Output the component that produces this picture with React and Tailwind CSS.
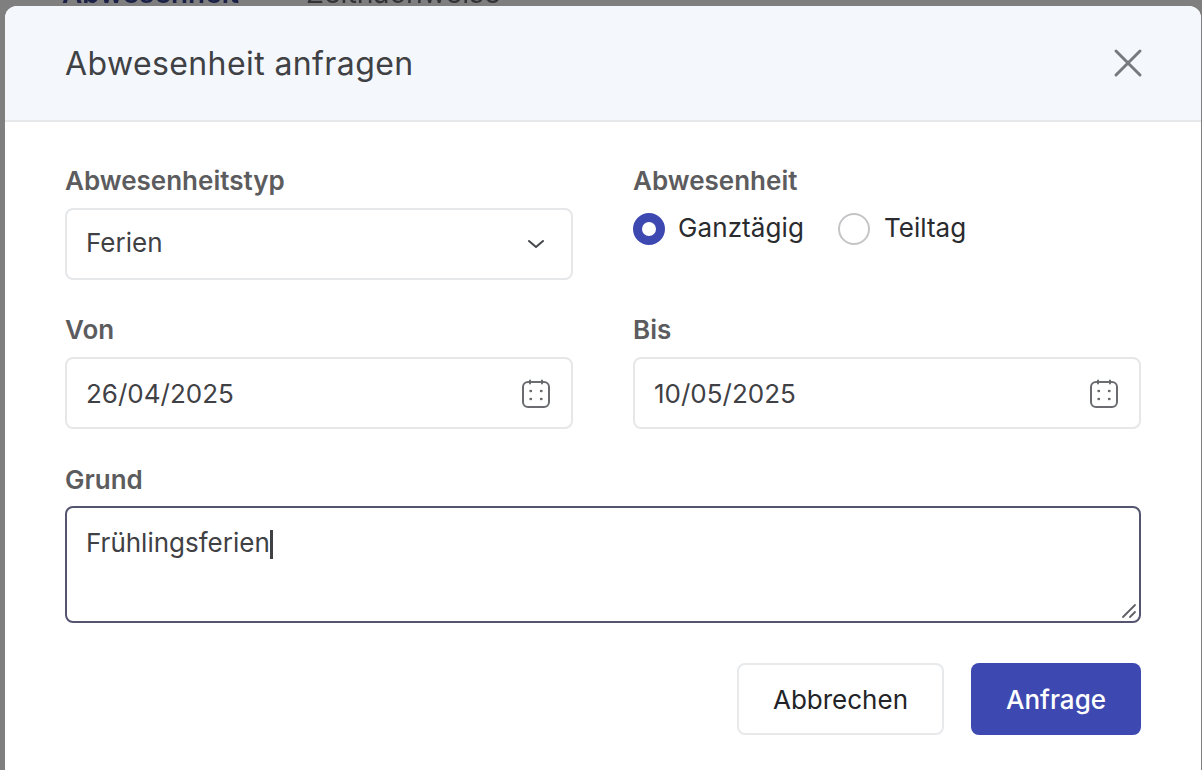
import React from "react";

const F = "font-['Inter','Liberation_Sans',sans-serif]";

function Label({ children }) {
  return <div className="h-[27px] text-[26px] leading-[25px] font-semibold text-[#5c5c5e]">{children}</div>;
}

function Calendar() {
  return (
    <svg width="30" height="30" viewBox="0 0 30 30" fill="none" stroke="#6a6c70" strokeWidth="2" strokeLinecap="round" className="mt-[2px]">
      <rect x="2" y="3" width="26" height="25" rx="5" />
      <path d="M9 1.5V4.5M21 1.5V4.5" />
      <path d="M9.5 12h.5M20 12h.5M9.5 20h.5M20 20h.5" strokeWidth="2.4" />
    </svg>
  );
}

function Field({ value, icon, textClass }) {
  return (
    <div className="mt-[13px] h-[72px] rounded-[8px] border-2 border-[#e6e7e9] bg-white flex items-center justify-between pl-[19px] pr-[20px] text-[26px] text-[#3f4145]">
      <span className={textClass}>{value}</span>
      {icon}
    </div>
  );
}

export default function App() {
  return (
    <div className={`${F} relative h-[770px] w-[1202px] overflow-hidden bg-[#7f7f80] pt-[6px] pl-[5px]`}>
      <div className="absolute left-[62px] top-[-28px] text-[28px] font-semibold text-[#1c2247] blur-[0.4px]">Abwesenheit</div>
      <div className="absolute left-[306px] top-[-28px] text-[28.5px] text-[#333336] blur-[0.4px]">Zeitnachweise</div>
      <div className="relative w-[1196px] h-[780px] rounded-t-[12px] bg-white overflow-hidden">
        <div className="h-[116px] bg-[#f4f7fb] border-b-2 border-[#e6e8ea] flex items-center justify-between pl-[60px] pr-[58px]">
          <h1 className="pt-[2px] text-[32px] font-normal text-[#3f4145] tracking-[0.4px]">Abwesenheit anfragen</h1>
          <svg width="30" height="30" viewBox="0 0 30 30" fill="none" stroke="#76797d" strokeWidth="3" strokeLinecap="round">
            <path d="M3 3L27 27M27 3L3 27" />
          </svg>
        </div>

        <div className="px-[60px] pt-[46px]">
          <div className="grid grid-cols-2 gap-x-[60px] w-[1076px]">
            <div>
              <Label>Abwesenheitstyp</Label>
              <Field
                value="Ferien"
                textClass="pb-[3px]"
                icon={
                  <svg width="18" height="10" viewBox="0 0 18 10" fill="none" stroke="#45474b" strokeWidth="2" strokeLinecap="round" strokeLinejoin="round" className="mr-[6px]">
                    <path d="M2 2l7 6 7-6" />
                  </svg>
                }
              />
            </div>
            <div>
              <Label>Abwesenheit</Label>
              <div className="mt-[13px] flex items-center text-[26px] text-[#2a2b2e]">
                <span className="h-[32px] w-[32px] rounded-full border-[9px] border-[#3d49b1] bg-white" />
                <span className="ml-[13px] pb-[2px] tracking-[0.1px]">Ganztägig</span>
                <span className="ml-[34px] h-[32px] w-[32px] rounded-full border-2 border-[#c4c5c7] bg-white" />
                <span className="ml-[14px] pb-[2px]">Teiltag</span>
              </div>
            </div>
          </div>

          <div className="grid grid-cols-2 gap-x-[60px] w-[1076px] mt-[37px]">
            <div>
              <Label>Von</Label>
              <Field value="26/04/2025" icon={<Calendar />} />
            </div>
            <div>
              <Label>Bis</Label>
              <Field value="10/05/2025" icon={<Calendar />} />
            </div>
          </div>

          <div className="mt-[38px] w-[1076px]">
            <Label>Grund</Label>
            <div className="relative mt-[12px] h-[117px] rounded-[8px] border-2 border-[#54566f] bg-white pl-[19px] pt-[17px] text-[26px] leading-[36px] text-[#3f4145]">
              <span>Frühlingsferien</span>
              <span className="inline-block w-[3px] h-[29px] align-[-7px] bg-[#3f4145]" />
              <svg width="16" height="16" viewBox="0 0 16 16" fill="none" stroke="#5f6064" strokeWidth="1.8" strokeLinecap="round" className="absolute right-[2px] bottom-[2px]">
                <path d="M2 14L14 2M9 14L14 9" />
              </svg>
            </div>
          </div>

          <div className="mt-[40px] w-[1076px] flex justify-end gap-[27px] text-[26px]">
            <button className="h-[72px] w-[207px] rounded-[8px] border-2 border-[#e8e9eb] bg-white text-[#232427]">Abbrechen</button>
            <button className="h-[72px] w-[170px] rounded-[8px] bg-[#3d49b1] text-white font-medium">Anfrage</button>
          </div>
        </div>
      </div>
    </div>
  );
}
